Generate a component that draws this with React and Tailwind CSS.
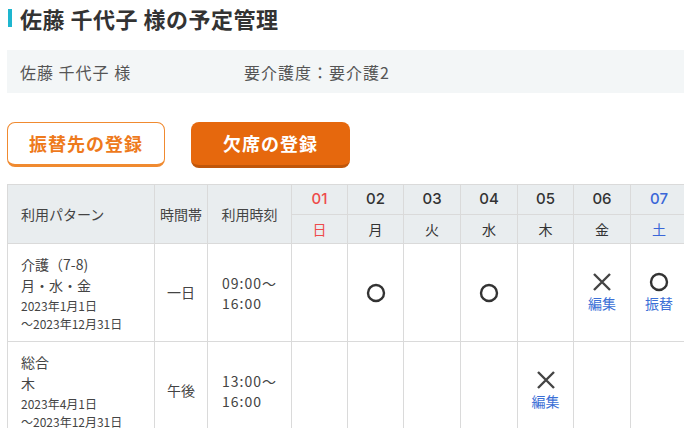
import React from "react";

const days = [
  { d: "01", w: "日", color: "text-[#ee4b4b]" },
  { d: "02", w: "月", color: "text-[#333]" },
  { d: "03", w: "火", color: "text-[#333]" },
  { d: "04", w: "水", color: "text-[#333]" },
  { d: "05", w: "木", color: "text-[#333]" },
  { d: "06", w: "金", color: "text-[#333]" },
  { d: "07", w: "土", color: "text-[#3a66d8]" },
];

const rows = [
  {
    name: "介護（7-8)",
    weekdays: "月・水・金",
    from: "2023年1月1日",
    to: "〜2023年12月31日",
    band: "一日",
    start: "09:00〜",
    end: "16:00",
    marks: [null, { type: "o" }, null, { type: "o" }, null, { type: "x", link: "編集" }, { type: "o", link: "振替" }],
  },
  {
    name: "総合",
    weekdays: "木",
    from: "2023年4月1日",
    to: "〜2023年12月31日",
    band: "午後",
    start: "13:00〜",
    end: "16:00",
    marks: [null, null, null, null, { type: "x", link: "編集" }, null, null],
  },
];

function Circle() {
  return (
    <svg width="20" height="20" viewBox="0 0 20 20">
      <circle cx="10" cy="10" r="8" fill="none" stroke="#333" strokeWidth="2.4" />
    </svg>
  );
}

function Cross() {
  return (
    <svg width="20" height="20" viewBox="0 0 20 20">
      <path d="M2 2 L18 18 M18 2 L2 18" stroke="#444" strokeWidth="2.4" strokeLinecap="butt" />
    </svg>
  );
}

function Mark({ mark }) {
  if (!mark) return null;
  return (
    <div className="flex flex-col items-center">
      {mark.type === "o" ? <Circle /> : <Cross />}
      {mark.link && (
        <span className="text-[14px] leading-[20px] text-[#3b6fd6] mt-[1px]">{mark.link}</span>
      )}
    </div>
  );
}

export default function App() {
  return (
    <div
      className="w-[684px] h-[428px] overflow-hidden bg-white text-[#333]"
      style={{ fontFamily: '"Noto Sans CJK JP", "Noto Sans", sans-serif' }}
    >
      {/* Title */}
      <div className="flex items-center pl-[8px] pt-[5px] h-[30px]">
        <span className="w-[4px] h-[18px] bg-[#1eb6cf] mr-[8px]" />
        <h1 className="text-[22px] font-bold leading-[26px] text-[#333] tracking-[0.5px]">
          佐藤 千代子 様の予定管理
        </h1>
      </div>

      {/* Info */}
      <div className="ml-[7px] mt-[20px] h-[43px] bg-[#f3f6f7] flex items-center pl-[13px] text-[16px] text-[#555] tracking-[1px]">
        <span className="w-[224px]">佐藤 千代子 様</span>
        <span>要介護度：要介護2</span>
      </div>

      {/* Buttons */}
      <div className="flex gap-[26px] ml-[7px] mt-[29px]">
        <button className="w-[158px] h-[45px] rounded-[8px] border-[1.5px] border-b-[3px] border-[#f08a30] bg-white text-[#ee7a1c] text-[18px] font-bold tracking-[1px]">
          振替先の登録
        </button>
        <button className="w-[159px] h-[46px] rounded-[8px] bg-[#e6680d] border-b-[3px] border-[#c0560a] text-white text-[18px] font-bold tracking-[1px]">
          欠席の登録
        </button>
      </div>

      {/* Table */}
      <div className="ml-[7px] mt-[16px]">
        <table className="table-fixed border-collapse w-[680px] text-[14px] text-[#444]">
          <colgroup>
            <col className="w-[147px]" />
            <col className="w-[53px]" />
            <col className="w-[84px]" />
            <col className="w-[56px]" />
            <col className="w-[56px]" />
            <col className="w-[57px]" />
            <col className="w-[57px]" />
            <col className="w-[56px]" />
            <col className="w-[57px]" />
            <col className="w-[57px]" />
          </colgroup>
          <thead>
            <tr className="h-[30px] bg-[#e9edef]">
              <th rowSpan={2} className="border border-[#dadada] font-normal text-left pl-[13px] align-middle">
                利用パターン
              </th>
              <th rowSpan={2} className="border border-[#dadada] font-normal text-center align-middle px-0">
                時間帯
              </th>
              <th rowSpan={2} className="border border-[#dadada] font-normal text-center align-middle">
                利用時刻
              </th>
              {days.map((d) => (
                <th
                  key={d.d}
                  className={`border border-[#dadada] text-[15px] font-medium text-center ${d.color}`}
                  style={{ fontFamily: '"Inter", "Noto Sans", sans-serif' }}
                >
                  {d.d}
                </th>
              ))}
            </tr>
            <tr className="h-[29px] bg-[#e9edef]">
              {days.map((d) => (
                <th key={d.w} className={`border border-[#dadada] text-[14px] font-normal text-center ${d.color}`}>
                  {d.w}
                </th>
              ))}
            </tr>
          </thead>
          <tbody>
            {rows.map((r, i) => (
              <tr key={i} className="h-[98px]">
                <td className="border border-[#dadada] pl-[13px] align-middle">
                  <div className="leading-[21px]">{r.name}</div>
                  <div className="leading-[21px]">{r.weekdays}</div>
                  <div className="text-[12px] leading-[18px] mt-[1px]">{r.from}</div>
                  <div className="text-[12px] leading-[17px]">{r.to}</div>
                </td>
                <td className="border border-[#dadada] text-center align-middle">{r.band}</td>
                <td className="border border-[#dadada] pl-[14px] align-middle leading-[20px] tracking-[1px]">
                  <div>{r.start}</div>
                  <div>{r.end}</div>
                </td>
                {r.marks.map((m, j) => (
                  <td key={j} className="border border-[#dadada] text-center align-middle">
                    <div className="flex justify-center">
                      <Mark mark={m} />
                    </div>
                  </td>
                ))}
              </tr>
            ))}
          </tbody>
        </table>
      </div>
    </div>
  );
}
